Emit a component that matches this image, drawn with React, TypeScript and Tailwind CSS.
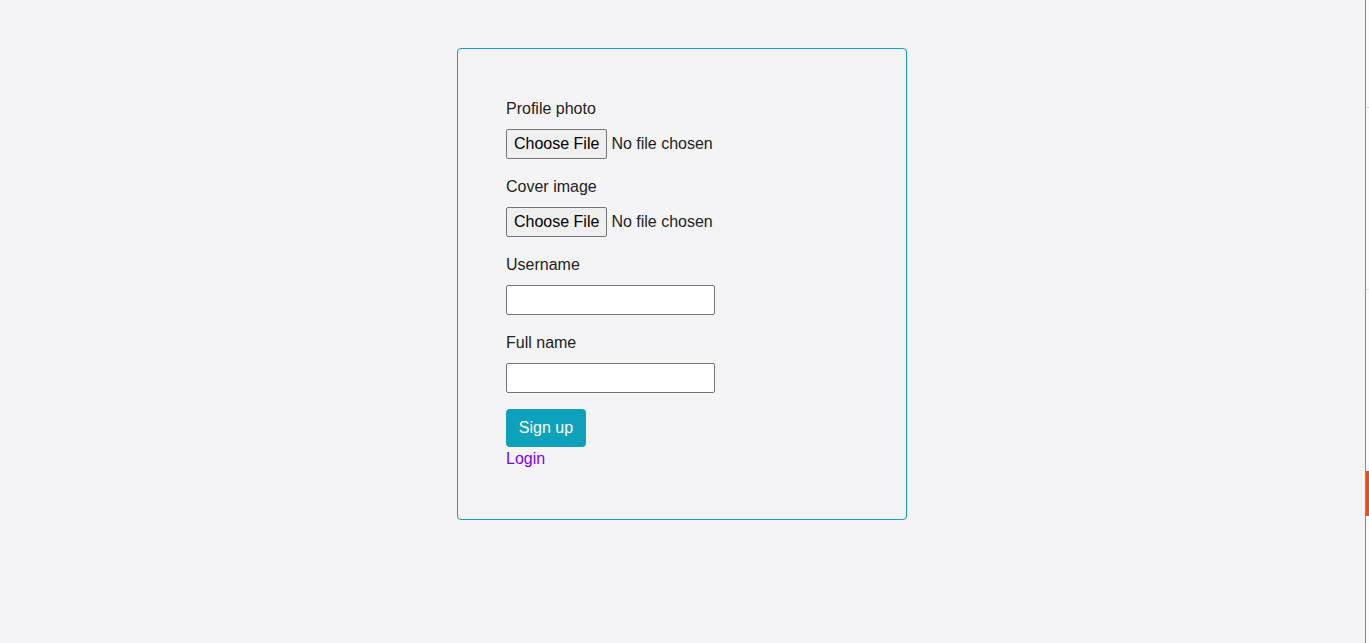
export default function App() {
  const fileCls =
    "h-[30px] text-[16px] text-[#222] file:h-[30px] file:px-[7px] file:mr-[4px] file:border file:border-[#767676] file:bg-[#efefef] file:rounded-[2px] file:text-black file:text-[16px]";
  const textCls =
    "w-[209px] h-[30px] px-[2px] bg-white border border-[#767676] rounded-[2px]";

  return (
    <div
      className="flex min-h-[643px] bg-[#f4f4f6] text-[#222]"
      style={{ fontFamily: '"Liberation Sans", Arial, sans-serif' }}
    >
      {/* Main */}
      <div className="flex-1 flex justify-center pt-[48px] pr-[1px]">
        <div className="w-[450px] h-[472px] border border-[#12a3bd] rounded-[4px] p-[48px] flex flex-col gap-4 text-[16px] leading-[22px]">
          <div className="flex flex-col gap-[8px]">
            <label className="leading-[24px]">Profile photo</label>
            <input type="file" className={fileCls} />
          </div>
          <div className="flex flex-col gap-[8px]">
            <label className="leading-[24px]">Cover image</label>
            <input type="file" className={fileCls} />
          </div>
          <div className="flex flex-col gap-[8px]">
            <label className="leading-[24px]">Username</label>
            <input type="text" className={textCls} />
          </div>
          <div className="flex flex-col gap-[8px]">
            <label className="leading-[24px]">Full name</label>
            <input type="text" className={textCls} />
          </div>
          <div className="flex flex-col">
            <button className="w-[80px] h-[38px] bg-[#0ea1bb] text-white rounded-[4px]">
              Sign up
            </button>
            <a href="#" className="text-[#7a00ff] leading-[23px]">
              Login
            </a>
          </div>
        </div>
      </div>

      {/* Right edge strip */}
      <div className="w-[4px] border-l border-[#8a8a8e] bg-[#fafafa] relative">
        <div className="absolute left-0 right-0 top-[107px] h-px bg-[#d4d4d8]" />
        <div className="absolute left-0 right-0 top-[289px] h-px bg-[#e4e4e7]" />
        <div className="absolute left-0 right-0 top-[471px] h-[45px] bg-[#e5501b]" />
      </div>
    </div>
  );
}
